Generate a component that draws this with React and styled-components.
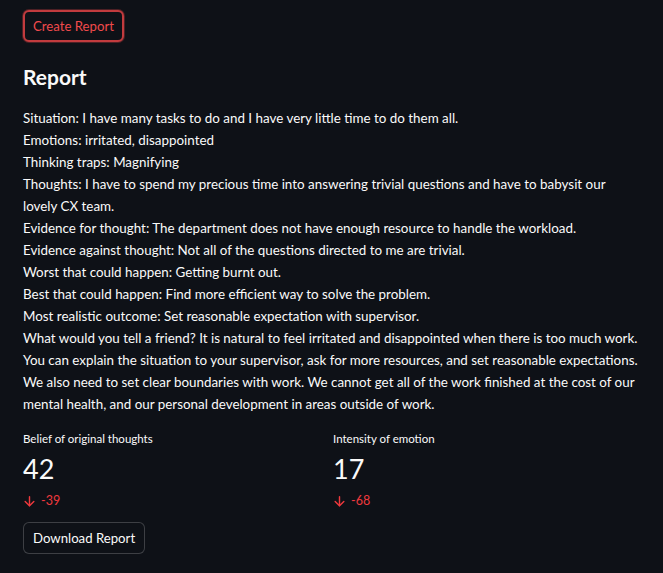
import React from "react";
import styled, { createGlobalStyle } from "styled-components";

const GlobalStyle = createGlobalStyle`
  html, body {
    margin: 0;
    padding: 0;
    background: #0e1117;
  }
  body {
    font-family: "Lato", "Noto Sans", sans-serif;
    color: #fafafa;
  }
`;

const lines = [
  "Situation: I have many tasks to do and I have very little time to do them all.",
  "Emotions: irritated, disappointed",
  "Thinking traps: Magnifying",
  "Thoughts: I have to spend my precious time into answering trivial questions and have to babysit our lovely CX team.",
  "Evidence for thought: The department does not have enough resource to handle the workload.",
  "Evidence against thought: Not all of the questions directed to me are trivial.",
  "Worst that could happen: Getting burnt out.",
  "Best that could happen: Find more efficient way to solve the problem.",
  "Most realistic outcome: Set reasonable expectation with supervisor.",
  "What would you tell a friend? It is natural to feel irritated and disappointed when there is too much work. You can explain the situation to your supervisor, ask for more resources, and set reasonable expectations. We also need to set clear boundaries with work. We cannot get all of the work finished at the cost of our mental health, and our personal development in areas outside of work.",
];

const metrics = [
  { label: "Belief of original thoughts", value: 42, delta: -39 },
  { label: "Intensity of emotion", value: 17, delta: -68 },
];

const ArrowDown = () => (
  <svg width="13" height="13" viewBox="0 0 24 24" fill="none" stroke="currentColor" strokeWidth="2.6" strokeLinecap="round" strokeLinejoin="round">
    <path d="M12 3v17" />
    <path d="M4 12l8 8 8-8" />
  </svg>
);

export default function App() {
  return (
    <>
      <GlobalStyle />
      <Page>
        <CreateButton>Create Report</CreateButton>
        <Heading>Report</Heading>
        <Body>
          {lines.map((line, i) => (
            <Line key={i}>{line}</Line>
          ))}
        </Body>
        <Metrics>
          {metrics.map((m) => (
            <Metric key={m.label}>
              <MetricLabel>{m.label}</MetricLabel>
              <MetricValue>{m.value}</MetricValue>
              <Delta>
                <ArrowDown />
                <span>{m.delta}</span>
              </Delta>
            </Metric>
          ))}
        </Metrics>
        <DownloadButton>Download Report</DownloadButton>
      </Page>
    </>
  );
}

const Page = styled.div`
  padding: 10px 0 20px 23px;
  width: 617px;
  display: flex;
  flex-direction: column;
  align-items: flex-start;
`;

const CreateButton = styled.button`
  font-family: inherit;
  font-size: 13.2px;
  color: #f04a4c;
  background: #0e1117;
  border: 2px solid #c23b3e;
  border-radius: 6px;
  height: 32px;
  padding: 0 8px;
  box-shadow: 0 0 0 1px rgba(194, 59, 62, 0.35);
`;

const Heading = styled.h2`
  font-size: 21px;
  font-weight: 700;
  margin: 21px 0 16px;
  line-height: 28px;
  color: #fafafa;
`;

const Body = styled.div`
  font-size: 13.4px;
  line-height: 22px;
  width: 617px;
`;

const Line = styled.div``;

const Metrics = styled.div`
  display: grid;
  grid-template-columns: 294px 294px;
  column-gap: 16px;
  margin-top: 16px;
`;

const Metric = styled.div`
  display: flex;
  flex-direction: column;
`;

const MetricLabel = styled.div`
  font-size: 11.5px;
  line-height: 16px;
  color: #fafafa;
`;

const MetricValue = styled.div`
  font-size: 27px;
  line-height: 36px;
  margin-top: 4px;
`;

const Delta = styled.div`
  display: flex;
  align-items: center;
  gap: 5px;
  color: #f0393d;
  font-size: 12.5px;
  line-height: 16px;
  margin-top: 6px;
`;

const DownloadButton = styled.button`
  font-family: inherit;
  font-size: 13.2px;
  color: #fafafa;
  background: #0e1117;
  border: 1px solid rgba(250, 250, 250, 0.2);
  border-radius: 6px;
  height: 32px;
  padding: 0 9px;
  margin-top: 13px;
`;
